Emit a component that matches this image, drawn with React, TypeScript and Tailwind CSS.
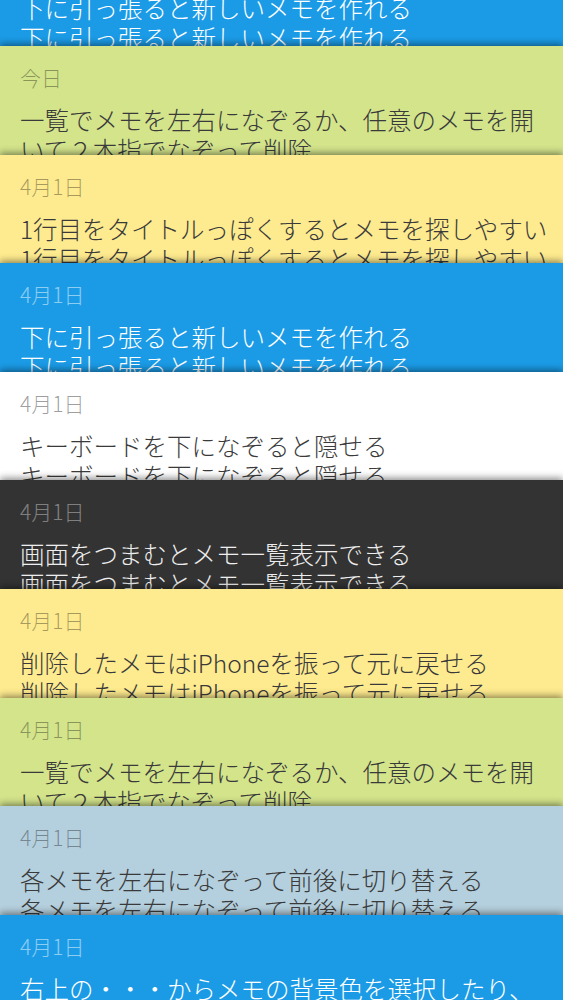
import React from "react";

type Memo = {
  date: string;
  body: string;
  theme: "blue" | "green" | "yellow" | "white" | "dark" | "sky";
};

const themes = {
  blue: { bg: "bg-[#1b9be6]", date: "text-white/50", text: "text-white" },
  green: { bg: "bg-[#d3e48b]", date: "text-black/35", text: "text-[#3a3a3a]" },
  yellow: { bg: "bg-[#feeb8f]", date: "text-black/35", text: "text-[#3a3a3a]" },
  white: { bg: "bg-white", date: "text-black/40", text: "text-[#3a3a3a]" },
  dark: { bg: "bg-[#333333]", date: "text-white/40", text: "text-[#eeeeee]" },
  sky: { bg: "bg-[#b4cfdd]", date: "text-black/35", text: "text-[#3a3a3a]" },
};

const memos: Memo[] = [
  { date: "4月1日", body: "下に引っ張ると新しいメモを作れる\n下に引っ張ると新しいメモを作れる", theme: "blue" },
  { date: "今日", body: "一覧でメモを左右になぞるか、任意のメモを開いて２本指でなぞって削除", theme: "green" },
  { date: "4月1日", body: "1行目をタイトルっぽくするとメモを探しやすい\n1行目をタイトルっぽくするとメモを探しやすい", theme: "yellow" },
  { date: "4月1日", body: "下に引っ張ると新しいメモを作れる\n下に引っ張ると新しいメモを作れる", theme: "blue" },
  { date: "4月1日", body: "キーボードを下になぞると隠せる\nキーボードを下になぞると隠せる", theme: "white" },
  { date: "4月1日", body: "画面をつまむとメモ一覧表示できる\n画面をつまむとメモ一覧表示できる", theme: "dark" },
  { date: "4月1日", body: "削除したメモはiPhoneを振って元に戻せる\n削除したメモはiPhoneを振って元に戻せる", theme: "yellow" },
  { date: "4月1日", body: "一覧でメモを左右になぞるか、任意のメモを開いて２本指でなぞって削除", theme: "green" },
  { date: "4月1日", body: "各メモを左右になぞって前後に切り替える\n各メモを左右になぞって前後に切り替える", theme: "sky" },
  { date: "4月1日", body: "右上の・・・からメモの背景色を選択したり、メールで送ったりできる", theme: "blue" },
];

const MemoCard = ({ memo, first, last }: { memo: Memo; first: boolean; last: boolean }) => {
  const t = themes[memo.theme];
  const height = first ? "h-[112px]" : last ? "h-[140px]" : "h-[108.6px]";
  return (
    <div
      className={`relative ${height} shrink-0 overflow-hidden ${t.bg} shadow-[0_-2px_7px_rgba(0,0,0,0.45)] pl-[20px] pr-[10px] pt-[19px]`}
    >
      <p className={`text-[21px] leading-[24px] font-light ${t.date}`}>{memo.date}</p>
      <p className={`mt-[16px] text-[24.5px] leading-[30px] font-light whitespace-pre-line ${t.text}`}>
        {memo.body}
      </p>
    </div>
  );
};

export default function App() {
  return (
    <div
      className="h-[1000px] w-[563px] overflow-hidden bg-[#1b9be6]"
      style={{ fontFamily: '"Noto Sans CJK JP", "Noto Sans", sans-serif' }}
    >
      <div className="mt-[-66px] flex flex-col">
        {memos.map((m, i) => (
          <MemoCard key={i} memo={m} first={i === 0} last={i === memos.length - 1} />
        ))}
      </div>
    </div>
  );
}
